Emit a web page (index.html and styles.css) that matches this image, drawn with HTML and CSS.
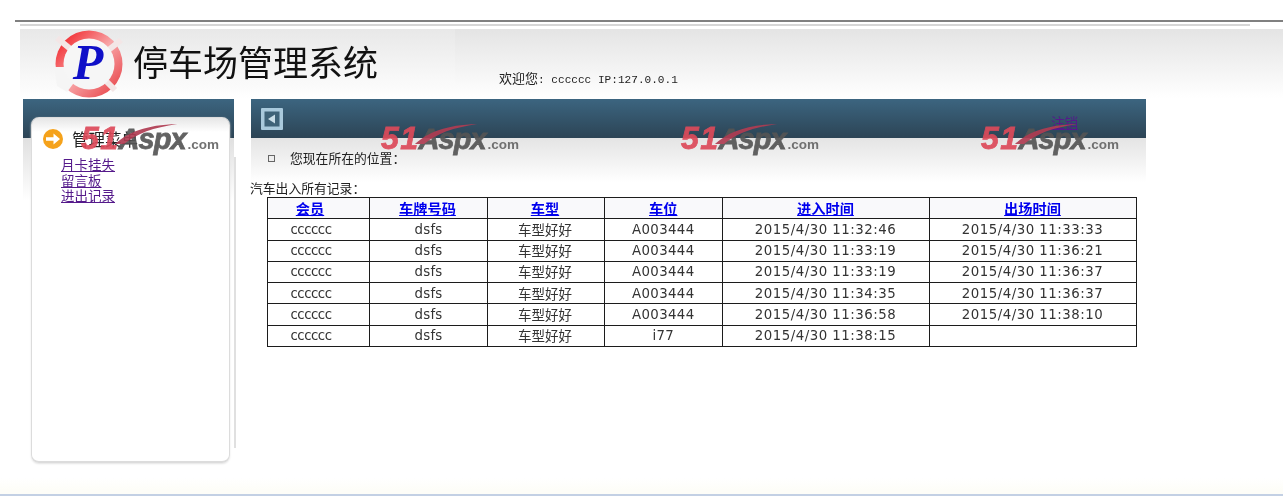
FILE: index.html
```html
<!DOCTYPE html>
<html lang="zh-CN">
<head>
<meta charset="utf-8">
<title>停车场管理系统</title>
<link rel="stylesheet" href="styles.css">
</head>
<body>
<div class="page">
  <div class="rule-dark"></div>
  <div class="rule-light"></div>
  <header class="header">
    <div class="brand">
      <svg class="logo" viewBox="0 0 68 68" aria-hidden="true">
        <defs>
          <linearGradient id="ringFill" x1="0" y1="0" x2="1" y2="1">
            <stop offset="0" stop-color="#f00c12"/>
            <stop offset=".5" stop-color="#f8a6a8"/>
            <stop offset="1" stop-color="#e5343a"/>
          </linearGradient>
        </defs>
        <circle cx="34" cy="34" r="33.500" fill="url(#ringFill)"/>
        <g stroke="#f3e6e6" stroke-width="6">
          <line x1="2" y1="8" x2="24" y2="26"/>
          <line x1="66" y1="10" x2="46" y2="26"/>
          <line x1="60" y1="60" x2="44" y2="44"/>
        </g>
        <path d="M-1 37H14L24 46L12 62L2 56Z" fill="#f5f5f5"/>
        <circle cx="34" cy="34" r="25.500" fill="#f6f6f6"/>
        <text class="logo-letter" x="33" y="49" text-anchor="middle">P</text>
      </svg>
      <h1 class="title">停车场管理系统</h1>
    </div>
    <div class="welcome"><span class="welcome-cjk">欢迎您</span>: cccccc IP:127.0.0.1</div>
  </header>
  <main class="main">
    <aside class="sidebar">
      <div class="panel">
        <div class="panel-head">
          <svg class="arrow-icon" viewBox="0 0 20 20" aria-hidden="true">
            <circle cx="10" cy="10" r="10" fill="#f5a21b"/>
            <path d="M3 8.300h7.500V4.500L17 10l-6.500 5.500v-3.800H3z" fill="#fff"/>
          </svg>
          <span class="panel-title">管理菜单</span>
        </div>
        <nav class="menu">
          <a href="#">月卡挂失</a>
          <a href="#">留言板</a>
          <a href="#">进出记录</a>
        </nav>
      </div>
    </aside>
    <div class="side-line"></div>
    <section class="content">
      <div class="content-bar">
        <svg class="back-icon" viewBox="0 0 22 22" aria-hidden="true">
          <rect width="22" height="22" rx="1" fill="#a9c9dc"/>
          <rect x="3.500" y="3.500" width="15" height="15" fill="#3f6379"/>
          <path d="M14 6.500v9L7 11z" fill="#c9dde8"/>
        </svg>
        <a class="logout" href="#">注销</a>
      </div>
      <div class="crumb">
        <span class="bullet"></span>
        <span class="crumb-text">您现在所在的位置：</span>
      </div>
      <div class="caption">汽车出入所有记录：</div>
      <table class="records">
        <colgroup>
          <col class="c1"><col class="c2"><col class="c3"><col class="c4"><col class="c5"><col class="c6">
        </colgroup>
        <thead>
          <tr>
            <th><a href="#">会员</a></th>
            <th><a href="#">车牌号码</a></th>
            <th><a href="#">车型</a></th>
            <th><a href="#">车位</a></th>
            <th><a href="#">进入时间</a></th>
            <th><a href="#">出场时间</a></th>
          </tr>
        </thead>
        <tbody>
          <tr><td>cccccc</td><td>dsfs</td><td>车型好好</td><td>A003444</td><td>2015/4/30 11:32:46</td><td>2015/4/30 11:33:33</td></tr>
          <tr><td>cccccc</td><td>dsfs</td><td>车型好好</td><td>A003444</td><td>2015/4/30 11:33:19</td><td>2015/4/30 11:36:21</td></tr>
          <tr><td>cccccc</td><td>dsfs</td><td>车型好好</td><td>A003444</td><td>2015/4/30 11:33:19</td><td>2015/4/30 11:36:37</td></tr>
          <tr><td>cccccc</td><td>dsfs</td><td>车型好好</td><td>A003444</td><td>2015/4/30 11:34:35</td><td>2015/4/30 11:36:37</td></tr>
          <tr><td>cccccc</td><td>dsfs</td><td>车型好好</td><td>A003444</td><td>2015/4/30 11:36:58</td><td>2015/4/30 11:38:10</td></tr>
          <tr><td>cccccc</td><td>dsfs</td><td>车型好好</td><td>i77</td><td>2015/4/30 11:38:15</td><td></td></tr>
        </tbody>
      </table>
    </section>
  </main>
  <footer class="footer"></footer>
  <div class="watermark wm1"><svg class="swoosh" viewBox="0 0 70 24" aria-hidden="true"><path d="M0 23C14 10 34 2 68 1C42 5 24 11 10 23Z"/></svg><b class="wm-num">51</b><b class="wm-name">Aspx</b><b class="wm-com">.com</b></div>
  <div class="watermark wm2"><svg class="swoosh" viewBox="0 0 70 24" aria-hidden="true"><path d="M0 23C14 10 34 2 68 1C42 5 24 11 10 23Z"/></svg><b class="wm-num">51</b><b class="wm-name">Aspx</b><b class="wm-com">.com</b></div>
  <div class="watermark wm3"><svg class="swoosh" viewBox="0 0 70 24" aria-hidden="true"><path d="M0 23C14 10 34 2 68 1C42 5 24 11 10 23Z"/></svg><b class="wm-num">51</b><b class="wm-name">Aspx</b><b class="wm-com">.com</b></div>
  <div class="watermark wm4"><svg class="swoosh" viewBox="0 0 70 24" aria-hidden="true"><path d="M0 23C14 10 34 2 68 1C42 5 24 11 10 23Z"/></svg><b class="wm-num">51</b><b class="wm-name">Aspx</b><b class="wm-com">.com</b></div>
</div>
</body>
</html>
```
FILE: styles.css
```css
* { box-sizing: border-box; }
html, body { margin: 0; height: 100%; background: #fff; }
body { overflow: hidden; }

.page {
  position: relative;
  display: flex;
  flex-direction: column;
  width: 1283px;
  height: 496px;
  padding-top: 20px;
  font-family: "Noto Sans CJK SC", "DejaVu Sans", sans-serif;
  font-size: 13px;
  color: #222;
  background: linear-gradient(#fff 478px, #fdfdf8 490px);
  filter: blur(.3px);
}

.rule-dark { height: 2px; margin-left: 15px; background: #808080; }
.rule-light { width: 1230px; height: 2px; margin: 2px 0 0 20px; background: #d6d6d6; }

.header {
  position: relative;
  display: flex;
  height: 69px;
  margin: 3px 0 0 20px;
  background: linear-gradient(#e4e4e4, #fff);
}
.brand {
  display: flex;
  align-items: flex-start;
  width: 435px;
  height: 55px;
  padding: 1px 0 0 35px;
  background: linear-gradient(#e8e8e8, #fafafa);
}
.logo { flex: none; width: 68px; height: 68px; }
.logo-letter {
  font-family: "Liberation Serif", serif;
  font-size: 50px;
  font-weight: 700;
  font-style: italic;
  fill: #1010c8;
}
.title {
  margin: 6px 0 0 10px;
  font-size: 35px;
  line-height: 50px;
  font-weight: 400;
  color: #111;
  white-space: nowrap;
}
.welcome {
  margin: 41px 0 0 44px;
  font-family: "Liberation Mono", "Noto Sans CJK SC", monospace;
  font-size: 11.100px;
  line-height: 16px;
  white-space: nowrap;
}
.welcome-cjk { font-family: "Noto Sans CJK SC", sans-serif; font-size: 13px; }

.main { display: flex; margin: 1px 0 0 23px; }

.sidebar {
  width: 211px;
  height: 364px;
  padding: 18px 0 0 8px;
  background:
    linear-gradient(#3c6580, #2c4455) 0 0 / 100% 39px no-repeat,
    linear-gradient(#e0e0e0, #fff 62px) 0 39px / 100% 100% no-repeat;
}
.panel {
  width: 199px;
  height: 346px;
  padding: 0 0 0 11px;
  background: linear-gradient(#e6e6e6, #fff 14px);
  border: 1px solid #dcdcdc;
  border-bottom-width: 2px;
  border-radius: 8px;
  box-shadow: 0 1px 2px #e4e4e4;
}
.panel-head { display: flex; align-items: center; height: 40px; padding-top: 2px; }
.arrow-icon { flex: none; width: 20px; height: 20px; }
.panel-title { margin-left: 9px; font-size: 16.500px; line-height: 24px; color: #222; }
.menu { display: flex; flex-direction: column; margin: -1px 0 0 18px; }
.menu a { width: max-content; font-size: 13.500px; line-height: 15.500px; color: #551a8b; }

.side-line { width: 2px; height: 291px; margin-top: 58px; background: #e0e0e0; }

.content { width: 895px; margin-left: 15px; }
.content-bar {
  display: flex;
  align-items: flex-start;
  justify-content: space-between;
  height: 39px;
  padding: 9px 68px 0 10px;
  background: linear-gradient(#3c6580, #2c4455);
}
.back-icon { width: 22px; height: 22px; }
.logout { margin-top: 5px; font-size: 13.500px; line-height: 18px; color: #551a8b; }
.crumb {
  display: flex;
  align-items: center;
  height: 44px;
  padding: 0 0 4px 17px;
  background: linear-gradient(#e4e4e4, #fff);
  font-size: 12.800px;
}
.crumb-text { margin-top: -2px; }
.bullet {
  width: 7px;
  height: 7px;
  margin: 0 15px -1px 0;
  border: 1px solid #666;
  background: #eee;
}
.caption { height: 15px; margin: -1px 0 1px -1px; font-size: 12.800px; line-height: 14px; color: #222; }

.records {
  width: 868.500px;
  margin-left: 16px;
  table-layout: fixed;
  border-collapse: collapse;
  font-size: 13.330px;
  font-family: "DejaVu Sans", "Noto Sans CJK SC", sans-serif;
}
.c1 { width: 102px; }
.c2 { width: 118px; }
.c3 { width: 117px; }
.c4 { width: 117.500px; }
.c5 { width: 207px; }
.c6 { width: 207px; }
.records th, .records td {
  height: 21.280px;
  padding: 1px 0 0;
  border: 1px solid #1c1c1c;
  text-align: center;
  line-height: 16px;
  white-space: nowrap;
}
.records thead { background: #f9f9fb; }
.records th { padding: 0 0 1px; font-family: "Noto Sans CJK SC", sans-serif; font-size: 14.200px; font-weight: 700; }
.records th a { color: #0000ee; }
.records td { color: #333; font-weight: 400; }
.records th:first-child { padding-right: 17px; }
.records td:first-child { padding-right: 15px; letter-spacing: -.5px; }
.records th:nth-child(2), .records th:nth-child(3), .records td:nth-child(3) { padding-right: 2px; }
.records td:nth-child(2) { letter-spacing: .2px; }
.records td:nth-child(3) { font-size: 13.500px; }
.records td:nth-child(4) { letter-spacing: .35px; }
.records td:nth-child(5), .records td:nth-child(6) { letter-spacing: .5px; }

.footer { height: 2px; margin-top: auto; background: #c3d0e4; }

.watermark {
  position: absolute;
  top: 121px;
  display: flex;
  align-items: baseline;
  height: 34px;
  font-family: "Liberation Sans", sans-serif;
  font-weight: 700;
  font-style: italic;
  white-space: nowrap;
  opacity: .92;
}
.wm1 { left: 81px; }
.wm2 { left: 381px; }
.wm3 { left: 681px; }
.wm4 { left: 981px; }
.wm-num { font-size: 32px; line-height: 34px; color: #dd4a5a; -webkit-text-stroke: .8px #dd4a5a; letter-spacing: 1.500px; }
.wm-name { margin-left: -1px; font-size: 29px; line-height: 34px; color: #555; -webkit-text-stroke: .8px #555; letter-spacing: -1px; }
.wm-com { margin-left: 2px; font-size: 13.500px; line-height: 34px; color: #666; font-style: normal; font-weight: 700; }
.swoosh { position: absolute; left: 33px; top: 2px; width: 66px; height: 22px; fill: #b03c52; }
```
